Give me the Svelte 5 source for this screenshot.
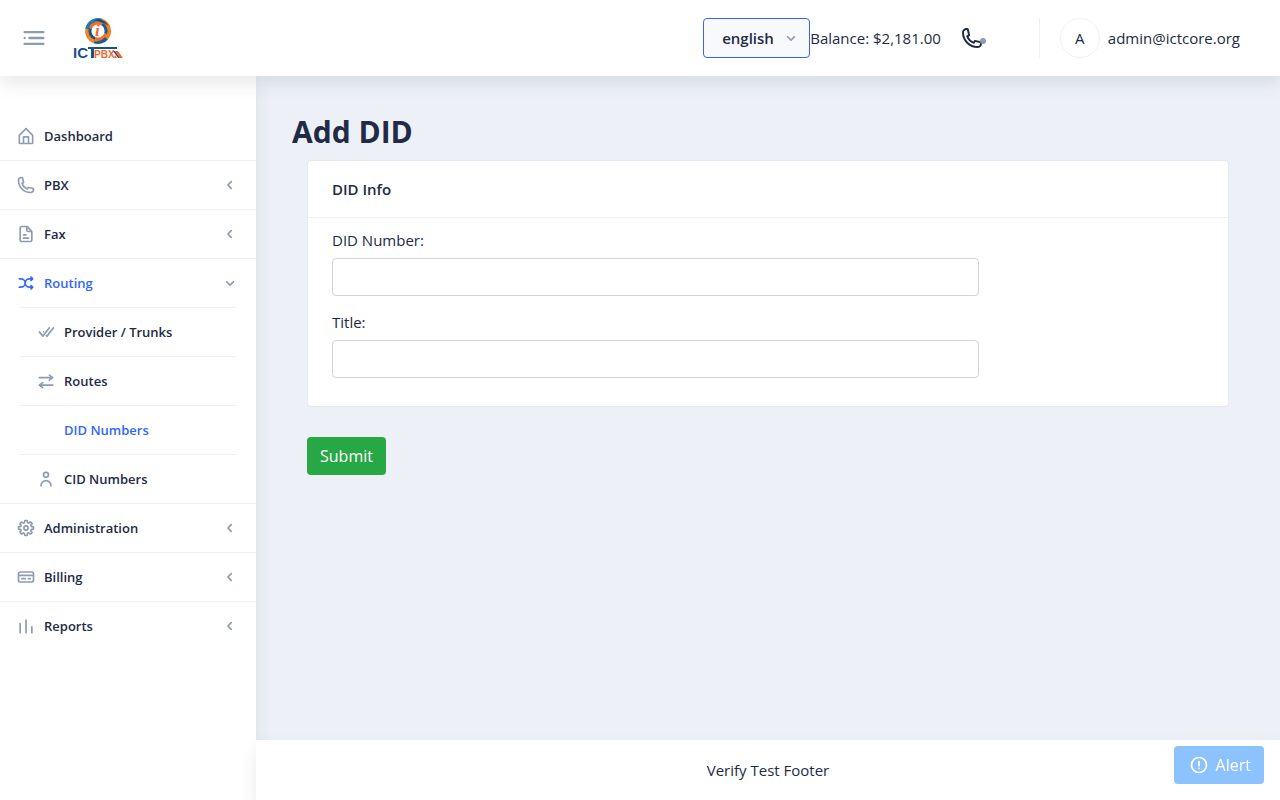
<script lang="ts">
	type MenuItem = {
		title: string;
		icon?: string;
		active?: boolean;
		group?: boolean;
		children?: MenuItem[];
	};

	const icons: Record<string, string> = {
		home: 'M20.42 10.18L12.71 2.3a1 1 0 0 0-1.42 0l-7.71 7.89A2 2 0 0 0 3 11.62V20a2 2 0 0 0 1.89 2h14.22A2 2 0 0 0 21 20v-8.38a2.07 2.07 0 0 0-.58-1.44zM10 20v-6h4v6zm9 0h-3v-7a1 1 0 0 0-1-1H9a1 1 0 0 0-1 1v7H5v-8.42l7-7.15 7 7.19z',
		phone: 'M17.4 22A15.42 15.42 0 0 1 2 6.6 4.6 4.6 0 0 1 6.6 2a3.94 3.94 0 0 1 .77.07 3.79 3.79 0 0 1 .72.18 1 1 0 0 1 .65.75l1.37 6a1 1 0 0 1-.26.92c-.13.14-.14.15-1.37.79a9.91 9.91 0 0 0 4.87 4.89c.65-1.24.66-1.25.8-1.38a1 1 0 0 1 .92-.26l6 1.37a1 1 0 0 1 .72.65 4.34 4.34 0 0 1 .19.73 4.77 4.77 0 0 1 .06.76A4.6 4.6 0 0 1 17.4 22zM6.6 4A2.61 2.61 0 0 0 4 6.6 13.41 13.41 0 0 0 17.4 20a2.61 2.61 0 0 0 2.6-2.6v-.33L15.36 16l-.29.55c-.45.87-.78 1.5-1.62 1.16a11.85 11.85 0 0 1-7.18-7.21c-.36-.78.32-1.14 1.18-1.59L8 8.64 6.93 4z',
		file: 'M15 16H9a1 1 0 0 0 0 2h6a1 1 0 0 0 0-2zM9 14h3a1 1 0 0 0 0-2H9a1 1 0 0 0 0 2zM19.74 8.33l-5.44-6a1 1 0 0 0-.74-.33h-7A2.53 2.53 0 0 0 4 4.5v15A2.53 2.53 0 0 0 6.56 22h10.88A2.53 2.53 0 0 0 20 19.5V9a1 1 0 0 0-.26-.67zM14 5l2.74 3h-2a.79.79 0 0 1-.74-.85zm3.44 15H6.56a.53.53 0 0 1-.56-.5v-15a.53.53 0 0 1 .56-.5H12v3.15A2.79 2.79 0 0 0 14.71 10H18v9.5a.53.53 0 0 1-.56.5z',
		shuffle: 'M18.71 14.29a1 1 0 0 0-1.42 1.42l.29.29H16a4 4 0 0 1 0-8h1.59l-.3.29a1 1 0 0 0 0 1.42A1 1 0 0 0 18 10a1 1 0 0 0 .71-.29l2-2A1 1 0 0 0 21 7a1 1 0 0 0-.29-.71l-2-2a1 1 0 0 0-1.42 1.42l.29.29H16a6 6 0 0 0-5 2.69A6 6 0 0 0 6 6H4a1 1 0 0 0 0 2h2a4 4 0 0 1 0 8H4a1 1 0 0 0 0 2h2a6 6 0 0 0 5-2.69A6 6 0 0 0 16 18h1.59l-.3.29a1 1 0 0 0 0 1.42A1 1 0 0 0 18 20a1 1 0 0 0 .71-.29l2-2A1 1 0 0 0 21 17a1 1 0 0 0-.29-.71z',
		doneAll: 'M16.62 6.21a1 1 0 0 0-1.41.17l-7 9-3.43-4.18a1 1 0 1 0-1.56 1.25l4.17 5.18a1 1 0 0 0 .78.37 1 1 0 0 0 .83-.38l7.83-10a1 1 0 0 0-.21-1.41zM21.62 6.21a1 1 0 0 0-1.41.17l-7 9-.61-.75-1.26 1.62 1.1 1.37a1 1 0 0 0 .78.37 1 1 0 0 0 .78-.38l7.83-10a1 1 0 0 0-.21-1.4zM8.71 13.06L10 11.44l-.2-.24a1 1 0 0 0-1.43-.2 1 1 0 0 0-.15 1.41z',
		swap: 'M4 9h13l-1.6 1.2a1 1 0 0 0-.2 1.4 1 1 0 0 0 .8.4 1 1 0 0 0 .6-.2l4-3a1 1 0 0 0 0-1.59l-3.86-3a1 1 0 0 0-1.23 1.58L17.08 7H4a1 1 0 0 0 0 2zM20 16H7l1.6-1.2a1 1 0 0 0-1.2-1.6l-4 3a1 1 0 0 0 0 1.59l3.86 3a1 1 0 0 0 .61.21 1 1 0 0 0 .79-.39 1 1 0 0 0-.17-1.4L6.92 18H20a1 1 0 0 0 0-2z',
		person: 'M12 11a4 4 0 1 0-4-4 4 4 0 0 0 4 4zm0-6a2 2 0 1 1-2 2 2 2 0 0 1 2-2zM12 13a7 7 0 0 0-7 7 1 1 0 0 0 2 0 5 5 0 0 1 10 0 1 1 0 0 0 2 0 7 7 0 0 0-7-7z',
		settings: 'M12.94 22h-1.89a1.68 1.68 0 0 1-1.68-1.68v-1.09a.34.34 0 0 0-.22-.29.38.38 0 0 0-.41 0l-.74.8a1.67 1.67 0 0 1-2.37 0L4.26 18.4a1.66 1.66 0 0 1-.5-1.19 1.72 1.72 0 0 1 .5-1.21l.74-.74a.34.34 0 0 0 0-.37c-.06-.15-.16-.26-.3-.26H3.68A1.69 1.69 0 0 1 2 12.94v-1.89a1.68 1.68 0 0 1 1.68-1.68h1.09a.34.34 0 0 0 .29-.22.38.38 0 0 0 0-.41L4.26 8a1.67 1.67 0 0 1 0-2.37L5.6 4.26a1.65 1.65 0 0 1 1.18-.5 1.72 1.72 0 0 1 1.22.5l.74.74a.34.34 0 0 0 .37 0c.15-.06.26-.16.26-.3V3.68A1.69 1.69 0 0 1 11.06 2H13a1.68 1.68 0 0 1 1.68 1.68v1.09a.34.34 0 0 0 .22.29.38.38 0 0 0 .41 0l.69-.8a1.67 1.67 0 0 1 2.37 0l1.37 1.34a1.67 1.67 0 0 1 .5 1.19 1.63 1.63 0 0 1-.5 1.18l-.74.74a.34.34 0 0 0 0 .37c.06.15.16.26.3.26h1.09A1.69 1.69 0 0 1 22 11.06V13a1.68 1.68 0 0 1-1.68 1.68h-1.09a.34.34 0 0 0-.29.22.34.34 0 0 0 0 .37l.77.77a1.67 1.67 0 0 1 0 2.37l-1.31 1.33a1.65 1.65 0 0 1-1.18.5 1.72 1.72 0 0 1-1.19-.5l-.77-.74a.34.34 0 0 0-.37 0c-.15.06-.26.16-.26.3v1.09A1.69 1.69 0 0 1 12.94 22zm-1.57-2h1.26v-.77a2.33 2.33 0 0 1 1.46-2.14 2.36 2.36 0 0 1 2.59.47l.54.54.88-.88-.54-.55a2.34 2.34 0 0 1-.48-2.56 2.33 2.33 0 0 1 2.14-1.45H20v-1.29h-.77a2.33 2.33 0 0 1-2.14-1.46 2.36 2.36 0 0 1 .47-2.59l.54-.54-.88-.88-.55.54a2.39 2.39 0 0 1-4-1.67V4h-1.3v.77a2.33 2.33 0 0 1-1.46 2.14 2.36 2.36 0 0 1-2.59-.47l-.54-.54-.88.88.54.55a2.39 2.39 0 0 1-1.67 4H4v1.26h.77a2.33 2.33 0 0 1 2.14 1.46 2.36 2.36 0 0 1-.47 2.59l-.54.54.88.88.55-.54a2.39 2.39 0 0 1 4 1.67zM12 15.5a3.5 3.5 0 1 1 3.5-3.5 3.5 3.5 0 0 1-3.5 3.5zm0-5a1.5 1.5 0 1 0 1.5 1.5 1.5 1.5 0 0 0-1.5-1.5z',
		card: 'M19 5H5a3 3 0 0 0-3 3v8a3 3 0 0 0 3 3h14a3 3 0 0 0 3-3V8a3 3 0 0 0-3-3zM4 8a1 1 0 0 1 1-1h14a1 1 0 0 1 1 1v1H4zm16 8a1 1 0 0 1-1 1H5a1 1 0 0 1-1-1v-5h16zM7 15h4a1 1 0 0 0 0-2H7a1 1 0 0 0 0 2zM15 15h2a1 1 0 0 0 0-2h-2a1 1 0 0 0 0 2z',
		chart: 'M12 4a1 1 0 0 0-1 1v15a1 1 0 0 0 2 0V5a1 1 0 0 0-1-1zM19 12a1 1 0 0 0-1 1v7a1 1 0 0 0 2 0v-7a1 1 0 0 0-1-1zM5 8a1 1 0 0 0-1 1v11a1 1 0 0 0 2 0V9a1 1 0 0 0-1-1z',
		left: 'M13.36 17a1 1 0 0 1-.72-.31l-3.86-4a1 1 0 0 1 0-1.4l4-4a1 1 0 1 1 1.42 1.42L10.9 12l3.18 3.3a1 1 0 0 1 0 1.41 1 1 0 0 1-.72.29z',
		down: 'M12 15.5a1 1 0 0 1-.71-.29l-4-4a1 1 0 1 1 1.42-1.42L12 13.1l3.3-3.18a1 1 0 1 1 1.38 1.44l-4 3.86a1 1 0 0 1-.68.28z',
		alert: 'M12 2a10 10 0 1 0 10 10A10 10 0 0 0 12 2zm0 18a8 8 0 1 1 8-8 8 8 0 0 1-8 8zM12 15a1 1 0 1 0 1 1 1 1 0 0 0-1-1zM12 7a1 1 0 0 0-1 1v5a1 1 0 0 0 2 0V8a1 1 0 0 0-1-1z'
	};

	const menu: MenuItem[] = [
		{ title: 'Dashboard', icon: 'home' },
		{ title: 'PBX', icon: 'phone', group: true },
		{ title: 'Fax', icon: 'file', group: true },
		{
			title: 'Routing',
			icon: 'shuffle',
			active: true,
			group: true,
			children: [
				{ title: 'Provider / Trunks', icon: 'doneAll' },
				{ title: 'Routes', icon: 'swap' },
				{ title: 'DID Numbers', active: true },
				{ title: 'CID Numbers', icon: 'person' }
			]
		},
		{ title: 'Administration', icon: 'settings', group: true },
		{ title: 'Billing', icon: 'card', group: true },
		{ title: 'Reports', icon: 'chart', group: true }
	];

	let language = $state('english');
	let didNumber = $state('');
	let title = $state('');
</script>

{#snippet icon(name: string | undefined)}
	<svg class="icon" viewBox="0 0 24 24" aria-hidden="true">
		{#if name}
			<path d={icons[name]} />
		{/if}
	</svg>
{/snippet}

{#snippet menuList(items: MenuItem[])}
	<ul>
		{#each items as item}
			<li>
				<a href="#/" class:active={item.active}>
					{@render icon(item.icon)}
					<span class="menu-title">{item.title}</span>
					{#if item.group}
						<span class="chevron">{@render icon(item.children ? 'down' : 'left')}</span>
					{/if}
				</a>
				{#if item.children}
					{@render menuList(item.children)}
				{/if}
			</li>
		{/each}
	</ul>
{/snippet}

<div class="layout">
	<header>
		<div class="brand">
			<button class="menu-toggle" aria-label="Toggle menu">
				<svg viewBox="0 0 24 24">
					<circle cx="4" cy="12" r="1" />
					<rect x="7" y="11" width="14" height="2" rx="0.94" />
					<rect x="3" y="16" width="18" height="2" rx="0.94" />
					<rect x="3" y="6" width="18" height="2" rx="0.94" />
				</svg>
			</button>
			<a class="logo" href="#/" aria-label="Home">
				<svg viewBox="0 0 52 44">
					<g fill="none" stroke-width="4">
						<path d="M15.2 13A11 11 0 0 1 29.8 4.7" stroke="#2277b3" />
						<path d="M29.8 4.7A11 11 0 0 1 34.4 22.1" stroke="#f58220" />
						<path d="M34.4 22.1A11 11 0 0 1 22.2 25.3" stroke="#1b5c94" />
						<path d="M22.2 25.3A11 11 0 0 1 15.2 13" stroke="#f58220" />
					</g>
					<g fill="none" stroke-width="3.6">
						<path d="M18.7 12.3A7.8 7.8 0 0 1 29.9 8.2" stroke="#f26f21" />
						<path d="M29.9 8.2A7.8 7.8 0 0 1 33.3 17.7" stroke="#1b5c94" />
						<path d="M33.3 17.7A7.8 7.8 0 0 1 23.3 22.3" stroke="#f26f21" />
						<path d="M23.3 22.3A7.8 7.8 0 0 1 18.7 12.3" stroke="#1d4f86" />
					</g>
					<path d="M22 4c6-2 12 1 14.500 6-4-3-8-4-14.500-6z" fill="#1b4a80" />
					<path d="M16 19c3 4 8 6 13 5-5 3-11 1-13-5z" fill="#f58220" />
					<circle cx="26" cy="15" r="6.6" fill="#fff" />
					<text x="23" y="20" class="logo-i">i</text>
					<text x="1" y="42" class="logo-ict">IC</text>
					<path d="M16 31h29v2H22v9h-3v-9h-3z" fill="#1c5288" />
					<text x="22" y="42" class="logo-pbx">PBX</text>
					<path d="M41 35h2l5 7h-2z" fill="#1c5288" />
					<path d="M43 35h3l5 7h-3zM43 39l2 3h-3z" fill="#ee6a2a" />
				</svg>
			</a>
		</div>

		<div class="actions">
			<div class="language">
				<select aria-label="Language" bind:value={language}>
					<option value="english">english</option>
				</select>
				{@render icon('down')}
			</div>
			<span>Balance: $2,181.00</span>
			<button class="call" aria-label="Phone">
				{@render icon('phone')}
				<span class="status"></span>
			</button>
			<div class="user">
				<span class="avatar">A</span>
				<span>admin@ictcore.org</span>
			</div>
		</div>
	</header>

	<div class="body">
		<nav>
			{@render menuList(menu)}
		</nav>

		<div class="content">
			<main>
				<h1>Add DID</h1>
				<form onsubmit={(e) => e.preventDefault()}>
					<section class="card">
						<h2>DID Info</h2>
						<div class="card-body">
							<div class="field">
								<label for="did-number">DID Number:</label>
								<input id="did-number" type="text" bind:value={didNumber} />
							</div>
							<div class="field">
								<label for="did-title">Title:</label>
								<input id="did-title" type="text" bind:value={title} />
							</div>
						</div>
					</section>
					<button class="btn submit" type="submit">Submit</button>
				</form>
			</main>
			<footer>Verify Test Footer</footer>
		</div>
	</div>

	<button class="btn alert" type="button">
		{@render icon('alert')}
		Alert
	</button>
</div>

<style>
	:global(body) {
		margin: 0;
	}

	.layout {
		min-height: 100vh;
		display: flex;
		flex-direction: column;
		font-family: 'Open Sans', sans-serif;
		font-size: 15px;
		line-height: 20px;
		color: #222b45;
		background: #edf1f7;
	}

	.layout *,
	.layout {
		box-sizing: border-box;
	}

	button,
	select,
	input {
		font-family: inherit;
		color: inherit;
	}

	.icon {
		width: 20px;
		height: 20px;
		flex-shrink: 0;
		fill: currentColor;
	}

	header {
		position: sticky;
		top: 0;
		z-index: 3;
		display: flex;
		align-items: center;
		justify-content: space-between;
		height: 76px;
		padding: 0 40px 0 20px;
		background: #fff;
		box-shadow: 0 8px 16px 0 rgba(44, 51, 73, 0.1);
	}

	.brand,
	.actions,
	.user {
		display: flex;
		align-items: center;
	}

	.brand {
		gap: 24px;
	}

	.menu-toggle {
		display: flex;
		padding: 0;
		border: none;
		background: none;
		cursor: pointer;
	}

	.menu-toggle svg {
		width: 28px;
		height: 28px;
		fill: #8f9bb3;
	}

	.logo svg {
		display: block;
		width: 52px;
		height: 44px;
	}

	.logo-i {
		font: italic bold 17px 'Liberation Serif', serif;
		fill: #ee6a2a;
	}

	.logo-ict {
		font: bold 15px 'Liberation Sans', sans-serif;
		fill: #1c5288;
	}

	.logo-pbx {
		font: bold 10px 'Liberation Sans', sans-serif;
		fill: #ee6a2a;
	}

	.language {
		position: relative;
		color: #8f9bb3;
	}

	.language select {
		appearance: none;
		display: block;
		height: 40px;
		padding: 0 35px 0 18px;
		border: 1px solid #3366ff;
		border-radius: 4px;
		background: #f7f9fc;
		color: #222b45;
		font-size: 15px;
		font-weight: 600;
	}

	.language .icon {
		position: absolute;
		right: 9px;
		top: 10px;
		pointer-events: none;
	}

	.call {
		position: relative;
		display: flex;
		margin: 0 55px 0 19px;
		padding: 0;
		border: none;
		background: none;
		cursor: pointer;
	}

	.call .icon {
		width: 24px;
		height: 24px;
	}

	.status {
		position: absolute;
		right: -2px;
		bottom: 6px;
		width: 6px;
		height: 6px;
		border-radius: 50%;
		background: #8f9bb3;
	}

	.user {
		gap: 8px;
		padding-left: 20px;
		border-left: 1px solid #edf1f7;
	}

	.avatar {
		display: flex;
		align-items: center;
		justify-content: center;
		width: 40px;
		height: 40px;
		border: 1px solid #edf1f7;
		border-radius: 50%;
	}

	.body {
		flex: 1;
		display: flex;
	}

	nav {
		width: 256px;
		flex-shrink: 0;
		padding-top: 36px;
		background: #fff;
		box-shadow: 0 8px 16px 0 rgba(44, 51, 73, 0.1);
	}

	nav ul {
		margin: 0;
		padding: 0;
		list-style: none;
	}

	nav li {
		border-bottom: 1px solid #edf1f7;
	}

	nav li:last-child {
		border-bottom: none;
	}

	nav a {
		display: flex;
		align-items: center;
		gap: 8px;
		padding: 12px 16px;
		color: #222b45;
		font-size: 13px;
		font-weight: 600;
		line-height: 24px;
		text-decoration: none;
	}

	nav a > .icon,
	.chevron {
		color: #8f9bb3;
	}

	nav a.active,
	nav a.active > .icon {
		color: #3366ff;
	}

	.menu-title {
		flex: 1;
	}

	.chevron {
		display: flex;
	}

	nav li ul {
		padding: 0 20px;
	}

	nav li ul li {
		border-top: 1px solid #edf1f7;
		border-bottom: none;
	}

	.content {
		flex: 1;
		min-width: 0;
		display: flex;
		flex-direction: column;
	}

	main {
		flex: 1;
		padding: 36px;
	}

	h1 {
		margin: 0 0 8px;
		font-size: 30px;
		font-weight: 700;
		line-height: 40px;
	}

	form {
		padding: 0 15px;
	}

	.card {
		margin-bottom: 30px;
		border: 1px solid #e4e9f2;
		border-radius: 4px;
		background: #fff;
	}

	h2 {
		margin: 0;
		padding: 16px 24px;
		border-bottom: 1px solid #edf1f7;
		font-size: 15px;
		font-weight: 600;
		line-height: 24px;
	}

	.card-body {
		padding: 12px 24px;
	}

	.field {
		margin-bottom: 16px;
	}

	.field label {
		display: block;
		margin-bottom: 8px;
	}

	.field input {
		display: block;
		width: calc(75% - 7px);
		height: 38px;
		padding: 6px 12px;
		border: 1px solid #ced4da;
		border-radius: 4px;
		background: #fff;
		font-size: 16px;
	}

	.btn {
		padding: 6px 12px;
		border: 1px solid transparent;
		border-radius: 4px;
		color: #fff;
		font-size: 16px;
		line-height: 24px;
		cursor: pointer;
	}

	.submit {
		background-color: #28a745;
	}

	.alert {
		position: fixed;
		right: 16px;
		bottom: 16px;
		z-index: 4;
		display: flex;
		align-items: center;
		gap: 7px;
		padding-left: 14px;
		background-color: #8cc3ff;
	}

	footer {
		position: relative;
		padding: 20px;
		background: #fff;
		box-shadow: 0 8px 16px 0 rgba(44, 51, 73, 0.1);
		text-align: center;
	}
</style>
